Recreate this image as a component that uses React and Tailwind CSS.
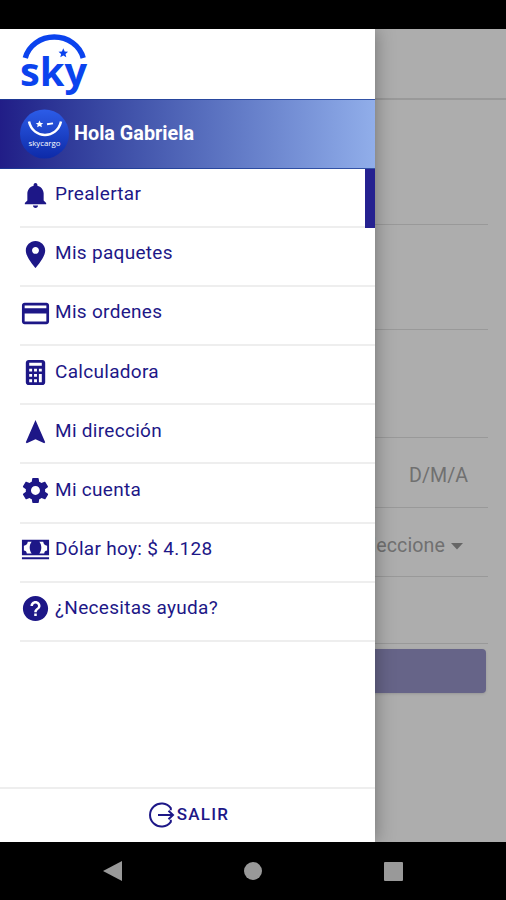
import {
  IoMdNotifications,
  IoMdPin,
  IoMdCard,
  IoMdCalculator,
  IoMdNavigate,
  IoMdSettings,
  IoMdCash,
  IoMdHelpCircle,
} from 'react-icons/io'

const items = [
  { label: 'Prealertar', icon: IoMdNotifications, active: true },
  { label: 'Mis paquetes', icon: IoMdPin },
  { label: 'Mis ordenes', icon: IoMdCard },
  { label: 'Calculadora', icon: IoMdCalculator },
  { label: 'Mi dirección', icon: IoMdNavigate },
  { label: 'Mi cuenta', icon: IoMdSettings },
  { label: 'Dólar hoy: $ 4.128', icon: IoMdCash },
  { label: '¿Necesitas ayuda?', icon: IoMdHelpCircle },
]

function SkyLogo() {
  return (
    <svg className="block" width="70" height="66" viewBox="0 0 70 66">
      <path d="M5.300 26A29.800 27.500 0 0 1 63.200 26" fill="none" stroke="#0b43ee" strokeWidth="5.4" />
      <path d="M43.300 16.200l1.400 3.200 3.400.3-2.600 2.200.8 3.400-3-1.800-3 1.800.8-3.400-2.600-2.200 3.400-.3z" fill="#0b43ee" />
      <text x="0" y="53.500" textLength="67" lengthAdjust="spacingAndGlyphs" fill="#0b43ee" fontFamily="Open Sans" fontWeight="700" fontSize="40">sky</text>
    </svg>
  )
}

function Avatar() {
  return (
    <svg className="block" width="49" height="50" viewBox="0 0 49 50">
      <defs>
        <linearGradient id="avatar" x1="0" y1="0" x2="0" y2="1">
          <stop offset="0" stopColor="#2c5ce8" />
          <stop offset="1" stopColor="#0d2aa8" />
        </linearGradient>
      </defs>
      <circle cx="24.5" cy="25" r="24.5" fill="url(#avatar)" />
      <path d="M9 12.5c4 18 28 18 32 0" fill="none" stroke="#fff" strokeWidth="2.5" />
      <path d="M19.500 11.500l1.200 2.400 2.500.2-1.900 1.700.6 2.500-2.400-1.300-2.400 1.300.6-2.500-1.900-1.700 2.500-.2z" fill="#fff" />
      <path d="M27 15.300l6-.9" stroke="#fff" strokeWidth="1.9" />
      <text x="8.500" y="37" textLength="32" lengthAdjust="spacingAndGlyphs" fill="#fff" fontFamily="Open Sans" fontSize="7.5">skycargo</text>
    </svg>
  )
}

function Page() {
  return (
    <div className="h-full bg-[#adadad] text-[#707070] text-[19.6px]">
      <div className="h-[71px] border-b-2 border-[#999]" />
      <div className="mr-[18px]">
        <div className="h-[125px] border-b border-[#999]" />
        <div className="h-[105px] border-b border-[#999]" />
        <div className="h-[108px] border-b border-[#999]" />
        <div className="h-[70px] border-b border-[#999] flex items-center justify-end pr-5 pt-1.5">D/M/A</div>
        <div className="h-[69px] border-b border-[#999] flex items-center justify-end pr-[25px] pt-2">
          <span className="text-[19px] -mr-px tracking-[0.05px]">S</span>
          <span className="tracking-[0.1px]">eleccione</span>
          <svg className="ml-1.5" width="12" height="7" viewBox="0 0 12 7">
            <path d="M0 0h12L6 6.5z" fill="#666" />
          </svg>
        </div>
        <div className="h-[67px] border-b border-[#999]" />
        <div className="h-11 mt-[5px] ml-[18px] mr-0.5 rounded bg-[#666488] shadow" />
      </div>
    </div>
  )
}

function Drawer() {
  return (
    <aside className="absolute inset-y-0 left-0 w-[375px] flex flex-col bg-white text-[#1d1787] shadow-[0_0_18px_rgba(0,0,0,0.35)]">
      <header className="h-[70px] pl-5 pt-[3px]">
        <SkyLogo />
      </header>
      <div className="h-[70px] pl-5 flex items-center bg-linear-to-r from-[#211d87] to-[#91aeea] border-y border-[#1d3d96]/80">
        <Avatar />
        <span className="ml-[5px] text-white font-bold text-[19.8px]">Hola Gabriela</span>
      </div>
      <ul className="pl-5">
        {items.map(({ label, icon: Icon, active }) => (
          <li key={label} className="relative h-[59.1px] border-b-2 border-[#eee] flex items-start pt-[12.3px]">
            <Icon className="shrink-0 size-[31px] -mt-[1.5px]" />
            <span className="ml-1 text-[19px] leading-[26px] tracking-[0.3px]">{label}</span>
            {active && <span className="absolute right-0 top-0 w-[10px] h-[59px] bg-[#252190]" />}
          </li>
        ))}
      </ul>
      <footer className="mt-auto h-[55px] border-t-2 border-[#eee] flex items-center justify-center pl-[3px] pb-px">
        <svg width="26" height="26" viewBox="0 0 26 26" fill="none" stroke="currentColor" strokeWidth="2">
          <path d="M21.800 8.300V6.200A11.500 11.500 0 1 0 21.800 19.800V17.700" />
          <path d="M9 13h15M19.500 8.700L24 13l-4.500 4.300" />
        </svg>
        <span className="ml-0.5 text-[17px] font-medium tracking-[1.2px]">SALIR</span>
      </footer>
    </aside>
  )
}

function NavBar() {
  return (
    <div className="h-[58px] bg-black flex items-center justify-between pl-[103px] pr-[103px]">
      <svg width="19" height="20" viewBox="0 0 19 20">
        <path d="M0 10L19 0v20z" fill="#999" />
      </svg>
      <span className="size-[18px] rounded-full bg-[#999]" />
      <span className="size-[19px] rounded-[1px] bg-[#999]" />
    </div>
  )
}

export default function App() {
  return (
    <div className="w-[506px] h-[900px] flex flex-col overflow-hidden font-[Roboto,sans-serif]">
      <div className="h-[29px] bg-black" />
      <main className="relative flex-1 overflow-hidden">
        <Page />
        <Drawer />
      </main>
      <NavBar />
    </div>
  )
}
